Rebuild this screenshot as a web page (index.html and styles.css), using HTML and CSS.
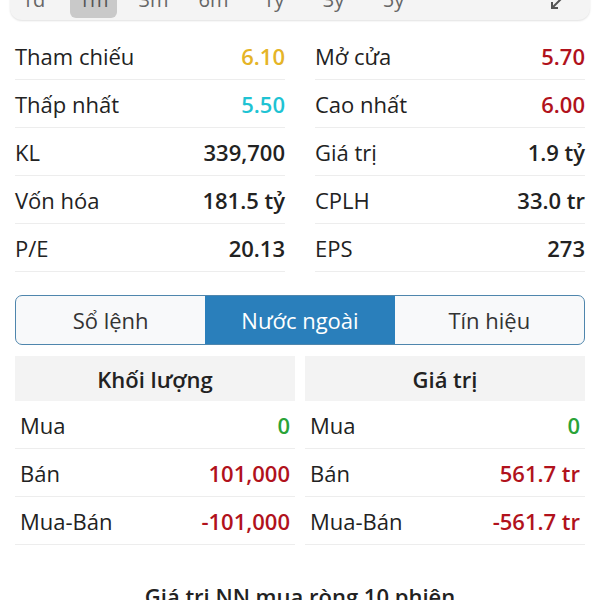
FILE: index.html
```html
<!DOCTYPE html>
<html lang="vi">
<head>
    <meta charset="UTF-8">
    <meta name="viewport" content="width=device-width, initial-scale=1.0">
    <title>Thông tin cổ phiếu</title>
    <link rel="stylesheet" href="styles.css">
</head>
<body>
    <div class="page">
        <!-- Thanh chọn khung thời gian -->
        <div class="range-bar">
            <span class="range">1d</span>
            <span class="range active">1m</span>
            <span class="range">3m</span>
            <span class="range">6m</span>
            <span class="range">1y</span>
            <span class="range">3y</span>
            <span class="range">5y</span>
            <span class="spacer"></span>
            <svg class="collapse-icon" width="20" height="20" viewBox="0 0 20 20">
                <path d="M16 4 L6 14 M6 8 V14 H12" fill="none" stroke="#555" stroke-width="2"/>
            </svg>
        </div>

        <!-- Thông số giao dịch -->
        <div class="stats">
            <div class="stat"><span>Tham chiếu</span><b class="ref">6.10</b></div>
            <div class="stat"><span>Mở cửa</span><b class="down">5.70</b></div>
            <div class="stat"><span>Thấp nhất</span><b class="floor">5.50</b></div>
            <div class="stat"><span>Cao nhất</span><b class="down">6.00</b></div>
            <div class="stat"><span>KL</span><b>339,700</b></div>
            <div class="stat"><span>Giá trị</span><b>1.9 tỷ</b></div>
            <div class="stat"><span>Vốn hóa</span><b>181.5 tỷ</b></div>
            <div class="stat"><span>CPLH</span><b>33.0 tr</b></div>
            <div class="stat"><span>P/E</span><b>20.13</b></div>
            <div class="stat"><span>EPS</span><b>273</b></div>
        </div>

        <!-- Tab -->
        <div class="tabs">
            <div class="tab">Sổ lệnh</div>
            <div class="tab active">Nước ngoài</div>
            <div class="tab">Tín hiệu</div>
        </div>

        <!-- Giao dịch nước ngoài -->
        <div class="foreign">
            <div class="col">
                <div class="col-head">Khối lượng</div>
                <div class="row"><span>Mua</span><b class="up">0</b></div>
                <div class="row"><span>Bán</span><b class="down">101,000</b></div>
                <div class="row"><span>Mua-Bán</span><b class="down">-101,000</b></div>
            </div>
            <div class="col">
                <div class="col-head">Giá trị</div>
                <div class="row"><span>Mua</span><b class="up">0</b></div>
                <div class="row"><span>Bán</span><b class="down">561.7 tr</b></div>
                <div class="row"><span>Mua-Bán</span><b class="down">-561.7 tr</b></div>
            </div>
        </div>

        <h2 class="section-title">Giá trị NN mua ròng 10 phiên</h2>
    </div>
</body>
</html>
```

FILE: styles.css
```css
/* Cała strona */
body {
    margin: 0;
    font-family: "Open Sans", "Noto Sans", sans-serif;
    color: #222;
    background: #fff;
    overflow: hidden;
}

.page {
    padding: 0 15px;
}

/* Thanh khung thời gian */
.range-bar {
    display: flex;
    align-items: center;
    height: 40px;
    margin: -20px -5px 0;
    padding: 0 14px 0 0;
    background: #f4f4f4;
    border-radius: 0 0 12px 12px;
    box-shadow: 0 1px 2px rgba(0, 0, 0, 0.12);
    font-size: 20px;
    color: #666;
}

.range {
    width: 47px;
    margin-right: 13px;
    text-align: center;
    line-height: 36px;
    border-radius: 6px;
}

.range.active {
    background: #c9c9c9;
    color: #555;
}

.spacer {
    flex: 1;
}

.collapse-icon {
    margin-top: 8px;
    margin-right: 10px;
}

/* Thông số */
.stats {
    display: grid;
    grid-template-columns: 1fr 1fr;
    column-gap: 30px;
    margin-top: 12px;
}

.stat {
    display: flex;
    justify-content: space-between;
    align-items: center;
    height: 47px;
    border-bottom: 1px solid #ededed;
    font-size: 22px;
}

.stat b,
.row b {
    font-weight: 600;
}

.ref { color: #e5b427; }
.floor { color: #1fc3d3; }
.down { color: #b1121c; }
.up { color: #2aa338; }

/* Tab */
.tabs {
    display: flex;
    margin-top: 23px;
    height: 48px;
    border: 1px solid #4f86ad;
    border-radius: 7px;
    overflow: hidden;
    background: #f8f9fa;
}

.tab {
    flex: 1;
    display: flex;
    justify-content: center;
    align-items: center;
    font-size: 22px;
    color: #333;
}

.tab.active {
    background: #2a7fbb;
    color: #fff;
}

/* Nước ngoài */
.foreign {
    display: grid;
    grid-template-columns: 1fr 1fr;
    column-gap: 10px;
    margin-top: 11px;
}

.col-head {
    height: 45px;
    display: flex;
    justify-content: center;
    align-items: center;
    background: #f3f3f3;
    font-size: 22px;
    font-weight: 600;
}

.row {
    display: flex;
    justify-content: space-between;
    align-items: center;
    height: 47px;
    padding: 0 5px;
    border-bottom: 1px solid #ededed;
    font-size: 22px;
}

.section-title {
    margin: 36px 0 0;
    text-align: center;
    font-size: 22px;
    font-weight: 600;
}
```
